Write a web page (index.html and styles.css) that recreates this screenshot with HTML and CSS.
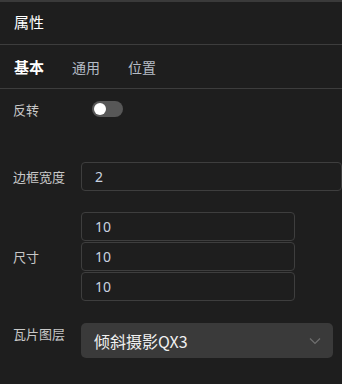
FILE: index.html
```html
<!DOCTYPE html>
<html lang="zh">
<head>
    <meta charset="UTF-8">
    <meta name="viewport" content="width=device-width, initial-scale=1.0">
    <title>属性</title>
    <link rel="stylesheet" href="styles.css">
</head>
<body>
    <div class="panel">
        <div class="panel-title">属性</div>
        <div class="tabs">
            <span class="tab active">基本</span>
            <span class="tab">通用</span>
            <span class="tab">位置</span>
        </div>
        <div class="form">
            <div class="row row-switch">
                <label class="label">反转</label>
                <span class="switch"><span class="knob"></span></span>
            </div>
            <div class="row row-border">
                <label class="label">边框宽度</label>
                <input class="input input-wide" type="text" value="2">
            </div>
            <div class="row row-size">
                <label class="label">尺寸</label>
                <div class="stack">
                    <input class="input" type="text" value="10">
                    <input class="input" type="text" value="10">
                    <input class="input" type="text" value="10">
                </div>
            </div>
            <div class="row row-layer">
                <label class="label">瓦片图层</label>
                <div class="select">
                    <span>倾斜摄影QX3</span>
                    <svg class="chevron" width="12" height="8" viewBox="0 0 12 8"><path d="M1 1.5 L6 6.5 L11 1.5" fill="none" stroke="#6f6f6f" stroke-width="1.2"/></svg>
                </div>
            </div>
        </div>
    </div>
</body>
</html>
```

FILE: styles.css
```css
html, body {
    margin: 0;
    background: #1e1e1e;
}
body {
    font-family: "Noto Sans CJK SC", "Noto Sans", sans-serif;
    color: #d0d0d0;
}
.panel {
    width: 342px;
    height: 384px;
    overflow: hidden;
    border-top: 2px solid #3a3a3a;
    box-sizing: border-box;
}
.panel-title {
    height: 42px;
    line-height: 40px;
    padding-left: 14px;
    font-size: 15px;
    color: #ffffff;
    border-bottom: 1px solid #3d3d3d;
}
.tabs {
    height: 43px;
    display: flex;
    align-items: center;
    gap: 28px;
    padding-left: 14px;
    border-bottom: 1px solid #3d3d3d;
}
.tab {
    font-size: 14px;
    color: #b5bcc6;
}
.tab.active {
    font-size: 15px;
    font-weight: 600;
    color: #ffffff;
}
.form {
    padding-left: 13px;
}
.row {
    display: flex;
    align-items: center;
}
.label {
    width: 68px;
    font-size: 13px;
    color: #c8c8c8;
    flex-shrink: 0;
}
.row-switch {
    margin-top: 9px;
    height: 22px;
}
.switch {
    position: relative;
    width: 31px;
    height: 16px;
    border-radius: 8px;
    background: #575757;
    margin-left: 11px;
}
.knob {
    position: absolute;
    left: 2px;
    top: 2px;
    width: 12px;
    height: 12px;
    border-radius: 50%;
    background: #ffffff;
}
.row-border {
    margin-top: 42px;
}
.input {
    box-sizing: border-box;
    width: 214px;
    height: 29px;
    background: #1e1e1e;
    border: 1px solid #3e3e3e;
    border-radius: 4px;
    padding: 0 0 0 13px;
    font-family: "Noto Sans", sans-serif;
    font-size: 14px;
    color: #c9d3e0;
    outline: none;
}
.input-wide {
    width: 300px;
}
.row-size {
    margin-top: 21px;
}
.stack {
    display: flex;
    flex-direction: column;
}
.stack .input + .input {
    margin-top: 1px;
}
.row-layer {
    margin-top: 22px;
    align-items: flex-start;
}
.row-layer .label {
    padding-top: 1px;
}
.select {
    box-sizing: border-box;
    width: 252px;
    height: 35px;
    background: #3a3a3a;
    border-radius: 5px;
    display: flex;
    align-items: center;
    justify-content: space-between;
    padding: 0 12px 0 13px;
    font-size: 16px;
    color: #f0f0f0;
}
.chevron {
    display: block;
}
```
